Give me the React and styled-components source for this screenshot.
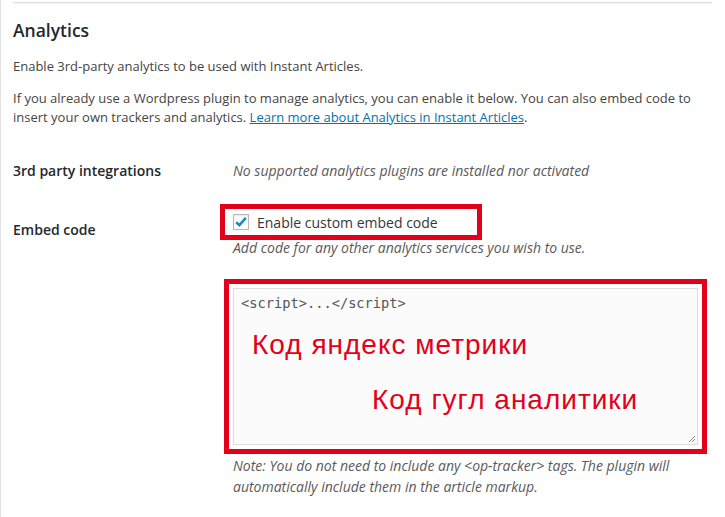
import React from "react";
import styled, { createGlobalStyle } from "styled-components";

const Global = createGlobalStyle`
  html, body { margin: 0; padding: 0; background: #fff; }
  body { font-family: "Open Sans", "Liberation Sans", sans-serif; color: #444; }
`;

const Page = styled.div`
  width: 725px;
  min-height: 517px;
  box-sizing: border-box;
  border-left: 1px solid #e2e2e2;
  padding: 2px 13px 0 12px;
  overflow: hidden;
`;

const Rule = styled.hr`
  margin: 0;
  border: 0;
  border-top: 1px solid #dcdcdc;
  border-bottom: 1px solid #f4f4f4;
`;

const Title = styled.h2`
  margin: 15px 0 0;
  font-size: 17.5px;
  line-height: 23px;
  font-weight: 600;
  color: #23282d;
`;

const Para = styled.p`
  margin: ${(p) => p.$top}px 0 0;
  font-size: 13px;
  line-height: 19px;
  color: #444;
`;

const Link = styled.a`
  color: #0073aa;
  text-decoration: underline;
`;

const Form = styled.div`
  display: grid;
  grid-template-columns: 220px 1fr;
`;

const Label = styled.div`
  padding-top: ${(p) => p.$top}px;
  font-size: 14px;
  line-height: 19px;
  font-weight: 600;
  color: #23282d;
`;

const Cell = styled.div`
  padding-top: ${(p) => p.$top}px;
  padding-bottom: ${(p) => p.$bottom || 0}px;
`;

const Description = styled.p`
  margin: ${(p) => p.$top || 0}px 0 0;
  font-size: 14px;
  line-height: ${(p) => p.$lh || 19}px;
  font-style: italic;
  color: #5a5a5a;
`;

const Highlight = styled.div`
  box-sizing: border-box;
  width: ${(p) => p.$width}px;
  margin: ${(p) => p.$top || 0}px 0 0 ${(p) => p.$shift}px;
  border: 5px solid #e3001b;
  padding: ${(p) => p.$pad};
`;

const CheckRow = styled.label`
  display: flex;
  align-items: center;
  gap: 8px;
  height: 26px;
  font-size: 14px;
  color: #32373c;
`;

const CheckBox = styled.span`
  box-sizing: border-box;
  width: 16px;
  height: 16px;
  border: 1px solid #b4b9be;
  background: #fff;
  box-shadow: inset 0 1px 2px rgba(0, 0, 0, 0.1);
  display: flex;
  align-items: center;
  justify-content: center;
`;

const TextArea = styled.div`
  box-sizing: border-box;
  width: 465px;
  height: 157px;
  border: 1px solid #dcdcdc;
  background: #fbfbfb;
  padding: 4px 7px;
  position: relative;
`;

const Code = styled.div`
  font-family: "DejaVu Sans Mono", "Liberation Mono", monospace;
  font-size: 13.7px;
  line-height: 20px;
  color: #555;
`;

const Annotation = styled.div`
  margin: ${(p) => p.$top}px 0 0 ${(p) => p.$left}px;
  font-family: "Liberation Sans", Arial, sans-serif;
  font-size: 28px;
  letter-spacing: 1px;
  line-height: 30px;
  color: #e3001b;
  white-space: nowrap;
`;

const Grip = styled.svg`
  position: absolute;
  right: 1px;
  bottom: 1px;
`;

export default function App() {
  return (
    <>
      <Global />
      <Page>
        <Rule />
        <Title>Analytics</Title>
        <Para $top={15}>Enable 3rd-party analytics to be used with Instant Articles.</Para>
        <Para $top={13}>
          If you already use a Wordpress plugin to manage analytics, you can enable it below. You can also embed code to
          insert your own trackers and analytics. <Link href="#">Learn more about Analytics in Instant Articles</Link>.
        </Para>
        <Form>
          <Label $top={34}>3rd party integrations</Label>
          <Cell $top={34} $bottom={24}>
            <Description>No supported analytics plugins are installed nor activated</Description>
          </Cell>
          <Label $top={16}>Embed code</Label>
          <Cell $top={0}>
            <Highlight $width={262} $shift={-13} $pad="0 8px">
              <CheckRow>
                <CheckBox>
                  <svg width="14" height="14" viewBox="0 0 14 14">
                    <path d="M2.2 7.2 L5.4 10.2 L11.8 2.8" fill="none" stroke="#1e8cbe" strokeWidth="2.6" />
                  </svg>
                </CheckBox>
                Enable custom embed code
              </CheckRow>
            </Highlight>
            <Description $lh={16}>Add code for any other analytics services you wish to use.</Description>
            <Highlight $width={483} $shift={-9} $pad="4px" $top={23}>
              <TextArea>
                <Code>&lt;script&gt;...&lt;/script&gt;</Code>
                <Annotation $top={17} $left={11}>Код яндекс метрики</Annotation>
                <Annotation $top={25} $left={131}>Код гугл аналитики</Annotation>
                <Grip width="10" height="10" viewBox="0 0 10 10">
                  <path d="M9 3 L3 9 M9 6 L6 9" stroke="#888" strokeWidth="1" />
                </Grip>
              </TextArea>
            </Highlight>
            <Description $lh={21} $top={1}>
              Note: You do not need to include any &lt;op-tracker&gt; tags. The plugin will automatically include them in
              the article markup.
            </Description>
          </Cell>
        </Form>
      </Page>
    </>
  );
}
